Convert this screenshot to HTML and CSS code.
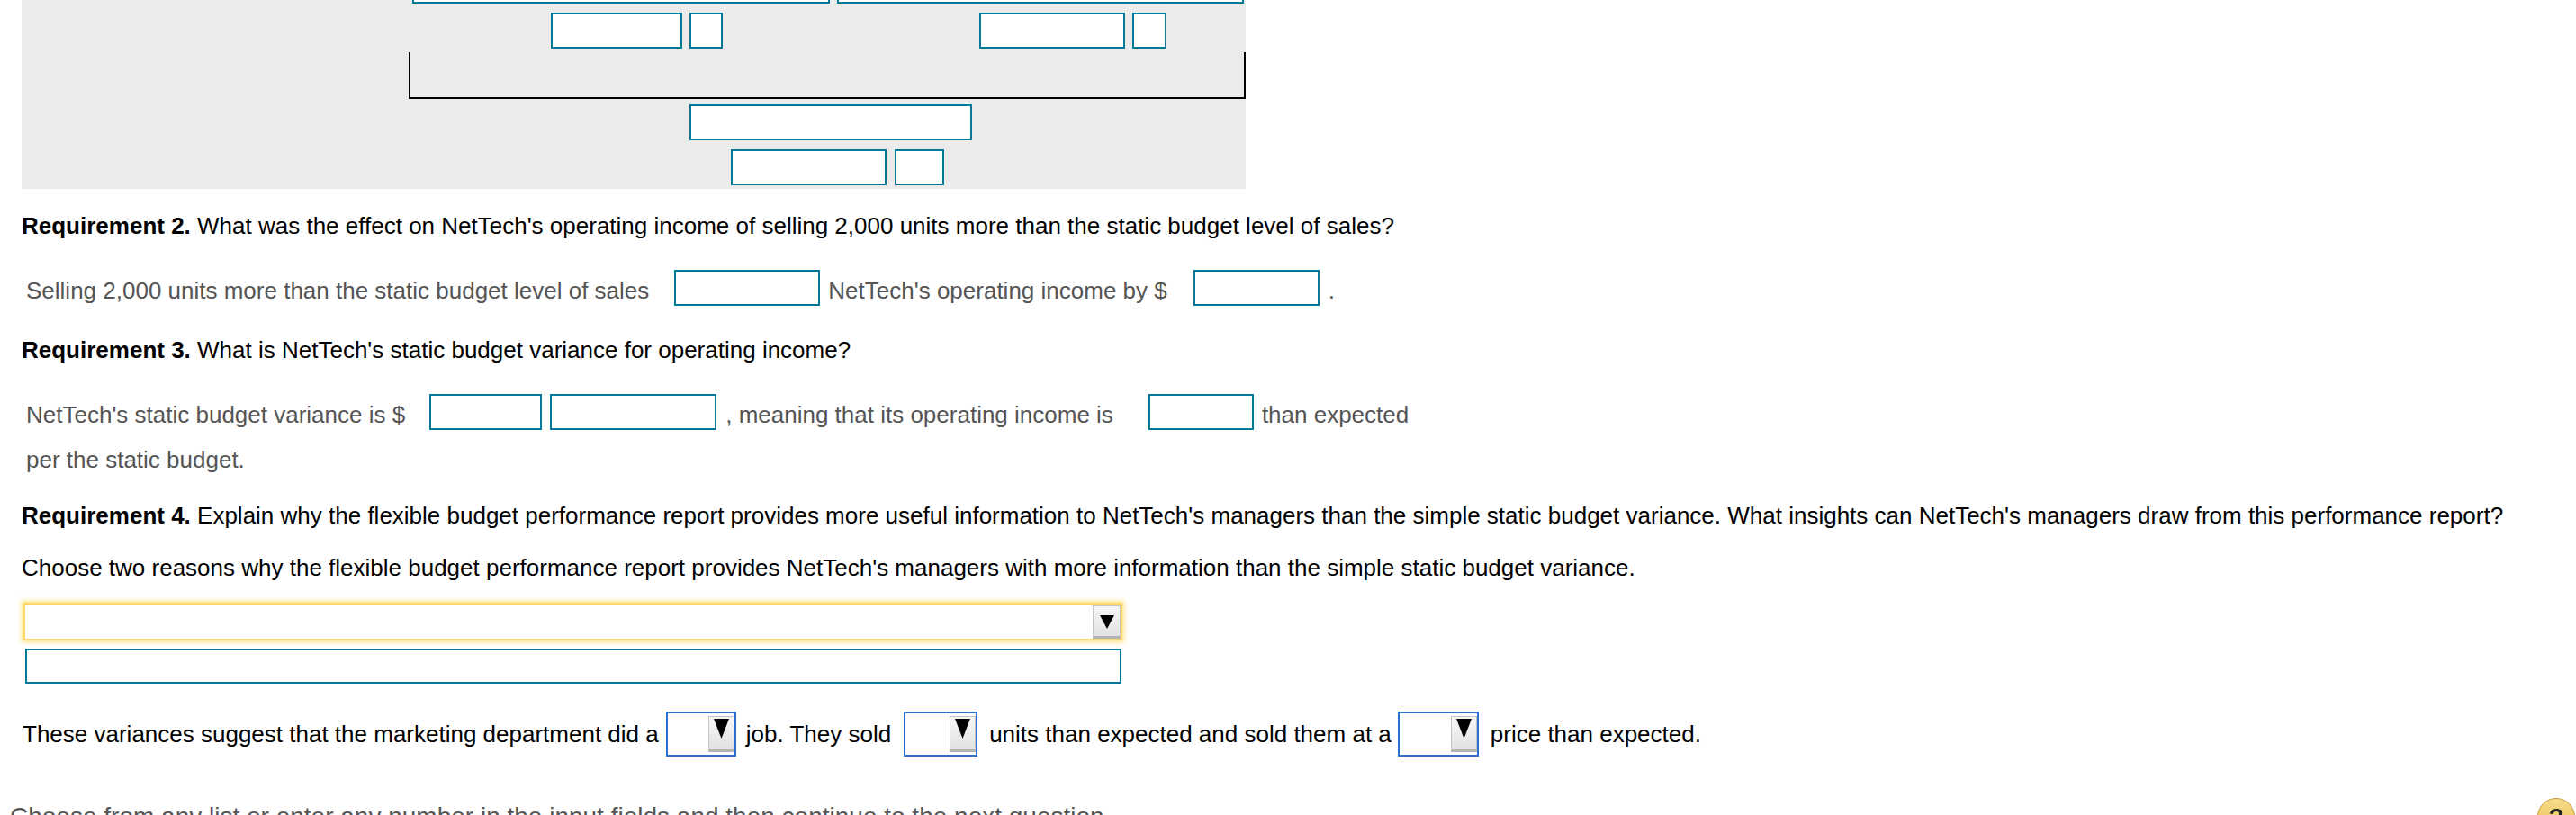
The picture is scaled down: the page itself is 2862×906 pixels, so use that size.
FILE: index.html
```html
<!DOCTYPE html>
<html lang="en">
<head>
<meta charset="utf-8">
<title>Requirements</title>
<link rel="stylesheet" href="styles.css">
</head>
<body>
<div class="page">
  <div class="panel">
    <div class="stubs"><span class="stub stub-a"></span><span class="stub stub-b"></span></div>
    <div class="prow prow-two">
      <span class="box w146"></span><span class="box w37"></span>
      <span class="box w162 far"></span><span class="box w38"></span>
    </div>
    <div class="bracket"></div>
    <div class="prow prow-total"><span class="box w314"></span></div>
    <div class="prow prow-last"><span class="box w173"></span><span class="box w55"></span></div>
  </div>

  <p class="req req2"><b>Requirement 2.</b> What was the effect on NetTech's operating income of selling 2,000 units more than the static budget level of sales?</p>

  <div class="line line-sell">
    <span class="txt t1">Selling 2,000 units more than the static budget level of sales</span>
    <span class="box w162"></span>
    <span class="txt t2">NetTech's operating income by $</span>
    <span class="box w140"></span>
    <span class="txt dot">.</span>
  </div>

  <p class="req req3"><b>Requirement 3.</b> What is NetTech's static budget variance for operating income?</p>

  <div class="line line-var">
    <span class="txt">NetTech's static budget variance is $</span>
    <span class="box w125 g27"></span>
    <span class="box w185 g9"></span>
    <span class="txt g10">, meaning that its operating income is</span>
    <span class="box w117 g39"></span>
    <span class="txt g9">than expected</span>
  </div>
  <p class="cont">per the static budget.</p>

  <p class="req req4"><b>Requirement 4.</b> Explain why the flexible budget performance report provides more useful information to NetTech's managers than the simple static budget variance. What insights can NetTech's managers draw from this performance report?</p>

  <p class="req choose">Choose two reasons why the flexible budget performance report provides NetTech's managers with more information than the simple static budget variance.</p>

  <div class="bigselect">
    <span class="btn btn-big"><svg width="16" height="15" viewBox="0 0 16 15"><polygon points="0,0 16,0 8,15" fill="#000"/></svg></span>
  </div>
  <div class="answerbox"></div>

  <div class="line line-final">
    <span>These variances suggest that the marketing department did a</span>
    <span class="sel sel-a"><span class="btn btn-small"><svg width="17" height="22" viewBox="0 0 17 22"><polygon points="0,0 17,0 8.5,22" fill="#000"/></svg></span></span>
    <span class="g11">job. They sold</span>
    <span class="sel sel-b"><span class="btn btn-small"><svg width="17" height="22" viewBox="0 0 17 22"><polygon points="0,0 17,0 8.5,22" fill="#000"/></svg></span></span>
    <span class="g13">units than expected and sold them at a</span>
    <span class="sel sel-c"><span class="btn btn-small"><svg width="17" height="22" viewBox="0 0 17 22"><polygon points="0,0 17,0 8.5,22" fill="#000"/></svg></span></span>
    <span class="g13">price than expected.</span>
  </div>

  <p class="footnote">Choose from any list or enter any number in the input fields and then continue to the next question.</p>
</div>
<div class="help">?</div>
</body>
</html>
```

FILE: styles.css
```css
* { box-sizing: border-box; }
html, body { margin: 0; padding: 0; background: #fff; }
body {
  font-family: "Liberation Sans", Arial, sans-serif;
  font-size: 26px;
  color: #000;
  overflow: hidden;
  height: 906px;
}
.page { width: 2862px; }

/* grey work panel */
.panel {
  margin-left: 24px;
  width: 1360px;
  height: 210px;
  background: #ebebeb;
  display: flex;
  flex-direction: column;
}
.box {
  display: block;
  flex: none;
  height: 40px;
  background: #fff;
  border: 2px solid #00799a;
}
.stubs { display: flex; gap: 8px; padding-left: 434px; height: 4px; }
.stub { display: block; height: 4px; background: #fff; border: 2px solid #00799a; border-top: 0; }
.stub-a { width: 464px; }
.stub-b { width: 452px; }
.prow { display: flex; gap: 8px; }
.prow-two { margin-top: 10px; padding-left: 588px; }
.prow-two .far { margin-left: 277px; }
.bracket {
  margin-top: 4px;
  margin-left: 430px;
  width: 930px;
  height: 52px;
  border: 2px solid #000;
  border-top: 0;
}
.prow-total { margin-top: 6px; padding-left: 742px; }
.prow-last { margin-top: 10px; padding-left: 788px; gap: 9px; }

.w37 { width: 37px; }
.w38 { width: 38px; }
.w55 { width: 55px; }
.w117 { width: 117px; }
.w125 { width: 125px; }
.w140 { width: 140px; }
.w146 { width: 146px; }
.w162 { width: 162px; }
.w173 { width: 173px; }
.w185 { width: 185px; }
.w314 { width: 314px; }

.g9 { margin-left: 9px; }
.g10 { margin-left: 10px; }
.g11 { margin-left: 11px; }
.g13 { margin-left: 13px; }
.g27 { margin-left: 27px; }
.g39 { margin-left: 39px; }

/* text */
.req {
  margin: 0;
  padding-left: 24px;
  line-height: 30px;
  white-space: nowrap;
}
.req b { font-weight: bold; }
.req2 { margin-top: 26px; }
.req3 { margin-top: 34px; }
.req4 { margin-top: 32px; }
.choose { margin-top: 28px; }

.line {
  display: flex;
  align-items: center;
  white-space: nowrap;
  color: #555;
}
.line .txt { padding-top: 6px; }
.line-sell { margin-top: 34px; padding-left: 29px; height: 40px; }
.line-sell .t1 { margin-right: 28px; }
.line-sell .t2 { margin: 0 29px 0 9px; }
.line-sell .dot { margin-left: 10px; }
.line-var { margin-top: 34px; padding-left: 29px; height: 40px; }
.cont { margin: 18px 0 0; padding-left: 29px; line-height: 30px; color: #555; }

.bigselect {
  margin: 24px 0 0 26px;
  width: 1221px;
  height: 42px;
  background: #fff;
  border: 2px solid #fdd867;
  box-shadow: 0 0 5px 2px rgba(255, 222, 110, 0.85);
  display: flex;
  justify-content: flex-end;
  align-items: flex-start;
  padding-top: 1px;
}
.btn {
  display: flex;
  align-items: flex-start;
  justify-content: center;
  background: linear-gradient(#f7f7f7, #e2e2e2);
  border: 1px solid #c4c4c4;
  border-bottom: 3px solid #b4b4b4;
}
.btn-big { width: 31px; height: 37px; padding-top: 10px; }
.btn-small { width: 29px; height: 40px; padding-top: 2px; }

.answerbox {
  margin: 9px 0 0 28px;
  width: 1218px;
  height: 39px;
  border: 2px solid #00799a;
}

.line-final { margin-top: 31px; padding-left: 25px; height: 50px; color: #000; }
.sel {
  display: flex;
  justify-content: flex-end;
  align-items: flex-start;
  height: 50px;
  margin-left: 8px;
  border: 2px solid #2b6fd1;
  background: #fff;
  padding-top: 3px;
}
.sel-a { width: 78px; }
.sel-b { width: 82px; margin-left: 14px; }
.sel-c { width: 90px; margin-left: 7px; }

.footnote {
  margin: 51px 0 0;
  padding-left: 11px;
  font-size: 28px;
  line-height: 32px;
  color: #555;
  white-space: nowrap;
}

.help {
  position: fixed;
  top: 887px;
  right: 1px;
  width: 42px;
  height: 42px;
  border-radius: 50%;
  background: linear-gradient(#f8dc8c, #e9b84c);
  border: 1px solid #c99a3e;
  color: #222;
  font-weight: bold;
  font-size: 28px;
  text-align: center;
  line-height: 42px;
}
```
